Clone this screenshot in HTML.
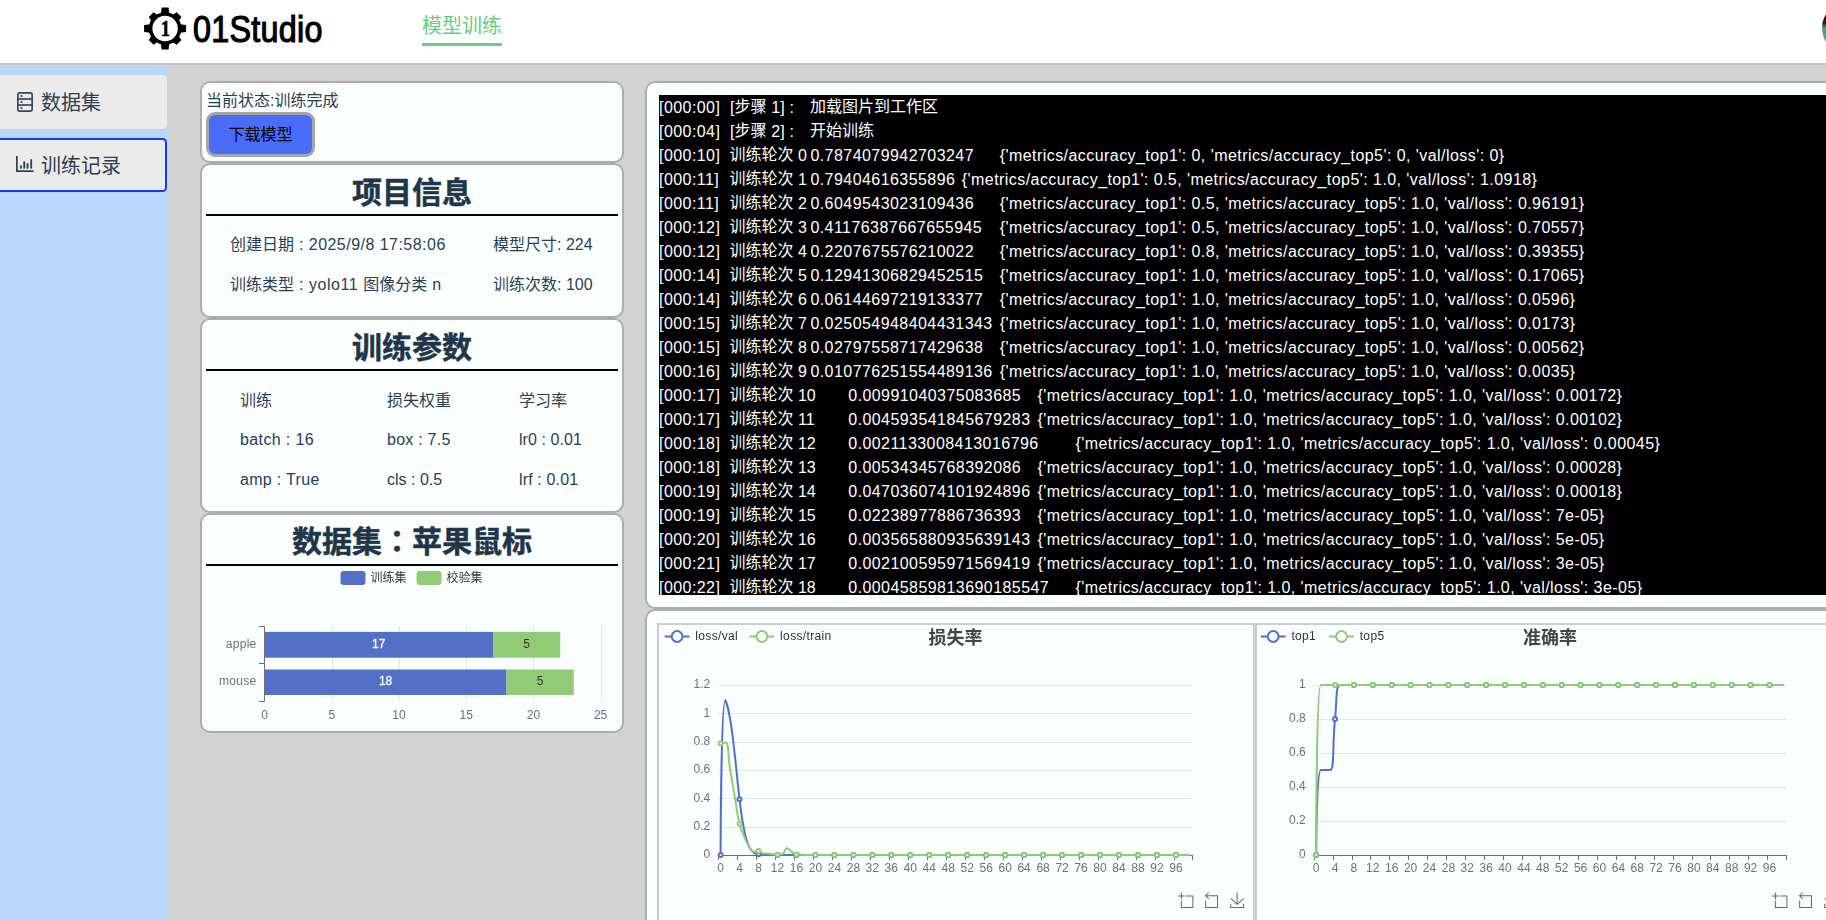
<!DOCTYPE html><html lang="zh-CN"><head><meta charset="utf-8"><title>01Studio 模型训练</title><style>
*{box-sizing:border-box;margin:0;padding:0}
html,body{width:1826px;height:920px;overflow:hidden}
body{position:relative;background:#d3d3d3;font-family:"Liberation Sans", "Noto Sans CJK SC", sans-serif;font-size:16px;color:#2c3e50;line-height:1.5}
.abs{position:absolute}
#hdr{position:absolute;left:0;top:0;width:1826px;height:63px;background:#fff}
#hline{position:absolute;left:0;top:63px;width:1826px;height:2px;background:#c6c6c6}
#logotxt{position:absolute;left:192.5px;top:6.6px;font-weight:normal;-webkit-text-stroke:1.15px #000;font-size:36px;line-height:46px;color:#000;transform-origin:0 0;transform:scaleX(.897);white-space:nowrap;letter-spacing:.3px}
#nav{position:absolute;left:422px;top:11px;width:80px;height:35px;font-size:20px;line-height:31px;color:#6dcb7d;border-bottom:3px solid #6dcb7d;white-space:nowrap}
#avatar{position:absolute;left:1822.3px;top:2px;width:52px;height:52px;border-radius:50%;background:linear-gradient(#2a1508 0,#2a1508 40%,#4c9c8c 50%,#58ad9b 100%)}
#side{position:absolute;left:0;top:65px;width:168px;height:855px;background:#bbd7fb}
.sitem{position:absolute;left:0;width:167px;height:54px;background:#ebebeb;border-radius:0 4.5px 4.5px 0;font-size:20px;color:#2c3e50}
.sitem span{position:absolute;left:41px;top:13px;line-height:30px;white-space:nowrap}
.sitem svg{position:absolute}
.card{position:absolute;left:200px;width:424px;background:#fbfeff;border:2px solid #adadad;border-radius:10px}
.card h1{position:absolute;left:0;width:420px;text-align:center;font-size:30px;line-height:40px;font-weight:bold;color:#213547;white-space:nowrap;-webkit-text-stroke:.45px #213547}
.hr{position:absolute;left:4px;width:412px;height:2px;background:#000}
.t{position:absolute;white-space:nowrap;line-height:24px;font-size:16px}
#btn{position:absolute;left:4px;top:29px;width:109px;height:45px;border:3px solid #a6a6a6;border-radius:9px;background:#4a6cfb;color:#000;font-size:16px;line-height:39px;text-align:center}
.panel{position:absolute;left:645px;width:1300px;background:#fbfeff;border:2px solid #adadad;border-radius:10px}
#log{position:absolute;left:659px;top:95px;width:1200px;height:500px;background:#000;color:#fff;overflow:hidden;font-size:16px}
.ln{position:relative;height:24px;line-height:24px;white-space:nowrap}
.ln>span{position:absolute;top:0;white-space:pre}
.ln>.l{letter-spacing:.44px;top:1px}
.ln i{font-style:normal;position:relative;top:-1px;letter-spacing:0}
.chart{position:absolute;top:623px;width:598px;height:304px;border:2px solid #ccc;background:#fbfeff}
svg text{font-family:"Liberation Sans", "Noto Sans CJK SC", sans-serif}
</style></head><body>
<div id="hdr"></div><div id="hline"></div>
<svg class="abs" style="left:0;top:0" width="340" height="63" viewBox="0 0 340 63"><g transform="translate(165.1,28.5)" fill="#000"><path d="M-4.3,-14.5L-3.45,-21.0H3.45L4.3,-14.5Z" transform="rotate(0)"/><path d="M-4.3,-14.5L-3.45,-19.7H3.45L4.3,-14.5Z" transform="rotate(45)"/><path d="M-4.3,-14.5L-3.45,-21.0H3.45L4.3,-14.5Z" transform="rotate(90)"/><path d="M-4.3,-14.5L-3.45,-19.7H3.45L4.3,-14.5Z" transform="rotate(135)"/><path d="M-4.3,-14.5L-3.45,-21.0H3.45L4.3,-14.5Z" transform="rotate(180)"/><path d="M-4.3,-14.5L-3.45,-19.7H3.45L4.3,-14.5Z" transform="rotate(225)"/><path d="M-4.3,-14.5L-3.45,-21.0H3.45L4.3,-14.5Z" transform="rotate(270)"/><path d="M-4.3,-14.5L-3.45,-19.7H3.45L4.3,-14.5Z" transform="rotate(315)"/><circle r="14.5" fill="none" stroke="#000" stroke-width="3.6"/><text transform="translate(.3,7.6) scale(.78,1)" x="0" y="0" text-anchor="middle" font-size="23" font-weight="bold" stroke="#000" stroke-width=".7" style="font-family:'Liberation Serif',serif">1</text></g></svg>
<div id="logotxt">01Studio</div>
<div id="nav">模型训练</div>
<div id="avatar"></div>
<div id="side"></div>
<div class="sitem" style="top:75px"><svg style="left:17px;top:17px" width="16" height="20" viewBox="0 0 16 20" fill="none" stroke="#34475a" stroke-width="1.7"><rect x="0.85" y="0.85" width="14.3" height="18.3" rx="1.6"/><line x1="0.85" y1="7" x2="15.15" y2="7"/><line x1="0.85" y1="13" x2="15.15" y2="13"/><g fill="#2c3e50" stroke="none"><rect x="3.6" y="3.1" width="1.8" height="1.8"/><rect x="3.6" y="9.1" width="1.8" height="1.8"/><rect x="3.6" y="15.1" width="1.8" height="1.8"/></g></svg><span>数据集</span></div>
<div class="sitem" style="top:138px;border:2px solid #0a3cff;border-left:0"><svg style="left:16px;top:16px" width="18" height="18" viewBox="0 0 18 18" fill="#2c3e50"><rect x="0" y="0" width="1.7" height="16"/><rect x="0" y="14.3" width="17.6" height="1.7"/><rect x="4.0" y="9.4" width="1.8" height="3.2"/><rect x="7.3" y="5.4" width="1.9" height="7.2"/><rect x="10.6" y="7.3" width="1.9" height="5.3"/><rect x="14.3" y="3.2" width="1.8" height="9.4"/></svg><span style="top:11px">训练记录</span></div>
<div class="card" style="top:81px;height:82px"><div class="t" style="left:4px;top:6px">当前状态:训练完成</div><div id="btn">下载模型</div></div>
<div class="card" style="top:163px;height:155px"><h1 style="top:8px">项目信息</h1><div class="hr" style="top:49px"></div><div class="t" style="left:28px;top:68.4px">创建日期<span style="letter-spacing:0.47px"> : 2025/9/8 17:58:06</span></div><div class="t" style="left:291px;top:68.4px">模型尺寸: 224</div><div class="t" style="left:28px;top:108.4px">训练类型<span style="letter-spacing:0.55px"> : yolo11 </span>图像分类<span style="letter-spacing:0.55px"> n</span></div><div class="t" style="left:291px;top:108.4px">训练次数: 100</div></div>
<div class="card" style="top:318px;height:195px"><h1 style="top:8px">训练参数</h1><div class="hr" style="top:49px"></div><div class="t" style="left:38px;top:68.7px">训练</div><div class="t" style="left:185px;top:68.7px">损失权重</div><div class="t" style="left:317px;top:68.7px">学习率</div><div class="t" style="left:38px;top:108px"><span style="letter-spacing:0.38px">batch : 16</span></div><div class="t" style="left:185px;top:108px"><span style="letter-spacing:0.24px">box : 7.5</span></div><div class="t" style="left:317px;top:108px"><span style="letter-spacing:0.07px">lr0 : 0.01</span></div><div class="t" style="left:38px;top:148px"><span style="letter-spacing:0.32px">amp : True</span></div><div class="t" style="left:185px;top:148px">cls : 0.5</div><div class="t" style="left:317px;top:148px"><span style="letter-spacing:0.15px">lrf : 0.01</span></div></div>
<div class="card" style="top:513px;height:220px"><h1 style="top:7px">数据集<span lang="ja" style="font-family:'Liberation Sans','Noto Sans CJK JP',sans-serif">：</span>苹果鼠标</h1><div class="hr" style="top:49px"></div><svg width="420" height="216" viewBox="0 0 420 216" style="position:absolute;left:0;top:0;will-change:transform"><rect x="138.5" y="56.0" width="25" height="14" rx="3" fill="#5470c6"/><text x="168.5" y="67.3" font-size="12" fill="#333">训练集</text><rect x="214.5" y="56.0" width="25" height="14" rx="3" fill="#91cc75"/><text x="244.5" y="67.3" font-size="12" fill="#333">校验集</text><line x1="130.5" x2="130.5" y1="111.2" y2="186.3" stroke="#E0E6F1"/><line x1="197.5" x2="197.5" y1="111.2" y2="186.3" stroke="#E0E6F1"/><line x1="264.5" x2="264.5" y1="111.2" y2="186.3" stroke="#E0E6F1"/><line x1="331.5" x2="331.5" y1="111.2" y2="186.3" stroke="#E0E6F1"/><line x1="399.5" x2="399.5" y1="111.2" y2="186.3" stroke="#E0E6F1"/><text x="62.6" y="203.7" font-size="12" fill="#6E7079" text-anchor="middle">0</text><text x="129.8" y="203.7" font-size="12" fill="#6E7079" text-anchor="middle">5</text><text x="197.0" y="203.7" font-size="12" fill="#6E7079" text-anchor="middle">10</text><text x="264.2" y="203.7" font-size="12" fill="#6E7079" text-anchor="middle">15</text><text x="331.4" y="203.7" font-size="12" fill="#6E7079" text-anchor="middle">20</text><text x="398.6" y="203.7" font-size="12" fill="#6E7079" text-anchor="middle">25</text><rect x="62.60" y="116.90" width="228.48" height="25.80" fill="#5470c6"/><rect x="291.08" y="116.90" width="67.20" height="25.80" fill="#91cc75"/><text x="176.8" y="133.0" font-size="12" fill="#f4f4f4" stroke="#f4f4f4" stroke-width=".4" text-anchor="middle">17</text><text x="324.7" y="133.0" font-size="12" fill="#333" text-anchor="middle">5</text><text x="54.6" y="132.6" font-size="12" fill="#6E7079" text-anchor="end" letter-spacing=".3">apple</text><rect x="62.60" y="154.50" width="241.92" height="25.50" fill="#5470c6"/><rect x="304.52" y="154.50" width="67.20" height="25.50" fill="#91cc75"/><text x="183.6" y="170.4" font-size="12" fill="#f4f4f4" stroke="#f4f4f4" stroke-width=".4" text-anchor="middle">18</text><text x="338.1" y="170.4" font-size="12" fill="#333" text-anchor="middle">5</text><text x="54.6" y="170.1" font-size="12" fill="#6E7079" text-anchor="end" letter-spacing=".3">mouse</text><line x1="62.5" x2="62.5" y1="111.2" y2="186.8" stroke="#6E7079"/><line x1="57.0" x2="62.5" y1="111.5" y2="111.5" stroke="#6E7079"/><line x1="57.0" x2="62.5" y1="148.5" y2="148.5" stroke="#6E7079"/><line x1="57.0" x2="62.5" y1="186.5" y2="186.5" stroke="#6E7079"/></svg></div>
<div class="panel" style="top:81px;height:528px"></div>
<div class="panel" style="top:609px;height:400px"></div>
<div id="log"><div class="ln"><span class="l" style="left:0">[000:00]</span><span class="l" style="left:71px;letter-spacing:.15px">[<i>步骤</i> 1] :</span><span style="left:151px">加载图片到工作区</span></div><div class="ln"><span class="l" style="left:0">[000:04]</span><span class="l" style="left:71px;letter-spacing:.15px">[<i>步骤</i> 2] :</span><span style="left:151px">开始训练</span></div><div class="ln"><span class="l" style="left:0">[000:10]</span><span class="l" style="left:70.5px;letter-spacing:0"><i>训练轮次</i> 0</span><span class="l" style="left:151.4px">0.7874079942703247</span><span class="l" style="left:340.7px">{'metrics/accuracy_top1': 0, 'metrics/accuracy_top5': 0, 'val/loss': 0}</span></div><div class="ln"><span class="l" style="left:0">[000:11]</span><span class="l" style="left:70.5px;letter-spacing:0"><i>训练轮次</i> 1</span><span class="l" style="left:151.4px">0.79404616355896</span><span class="l" style="left:302.8px">{'metrics/accuracy_top1': 0.5, 'metrics/accuracy_top5': 1.0, 'val/loss': 1.0918}</span></div><div class="ln"><span class="l" style="left:0">[000:11]</span><span class="l" style="left:70.5px;letter-spacing:0"><i>训练轮次</i> 2</span><span class="l" style="left:151.4px">0.6049543023109436</span><span class="l" style="left:340.7px">{'metrics/accuracy_top1': 0.5, 'metrics/accuracy_top5': 1.0, 'val/loss': 0.96191}</span></div><div class="ln"><span class="l" style="left:0">[000:12]</span><span class="l" style="left:70.5px;letter-spacing:0"><i>训练轮次</i> 3</span><span class="l" style="left:151.4px">0.41176387667655945</span><span class="l" style="left:340.7px">{'metrics/accuracy_top1': 0.5, 'metrics/accuracy_top5': 1.0, 'val/loss': 0.70557}</span></div><div class="ln"><span class="l" style="left:0">[000:12]</span><span class="l" style="left:70.5px;letter-spacing:0"><i>训练轮次</i> 4</span><span class="l" style="left:151.4px">0.2207675576210022</span><span class="l" style="left:340.7px">{'metrics/accuracy_top1': 0.8, 'metrics/accuracy_top5': 1.0, 'val/loss': 0.39355}</span></div><div class="ln"><span class="l" style="left:0">[000:14]</span><span class="l" style="left:70.5px;letter-spacing:0"><i>训练轮次</i> 5</span><span class="l" style="left:151.4px">0.12941306829452515</span><span class="l" style="left:340.7px">{'metrics/accuracy_top1': 1.0, 'metrics/accuracy_top5': 1.0, 'val/loss': 0.17065}</span></div><div class="ln"><span class="l" style="left:0">[000:14]</span><span class="l" style="left:70.5px;letter-spacing:0"><i>训练轮次</i> 6</span><span class="l" style="left:151.4px">0.06144697219133377</span><span class="l" style="left:340.7px">{'metrics/accuracy_top1': 1.0, 'metrics/accuracy_top5': 1.0, 'val/loss': 0.0596}</span></div><div class="ln"><span class="l" style="left:0">[000:15]</span><span class="l" style="left:70.5px;letter-spacing:0"><i>训练轮次</i> 7</span><span class="l" style="left:151.4px">0.025054948404431343</span><span class="l" style="left:340.7px">{'metrics/accuracy_top1': 1.0, 'metrics/accuracy_top5': 1.0, 'val/loss': 0.0173}</span></div><div class="ln"><span class="l" style="left:0">[000:15]</span><span class="l" style="left:70.5px;letter-spacing:0"><i>训练轮次</i> 8</span><span class="l" style="left:151.4px">0.02797558717429638</span><span class="l" style="left:340.7px">{'metrics/accuracy_top1': 1.0, 'metrics/accuracy_top5': 1.0, 'val/loss': 0.00562}</span></div><div class="ln"><span class="l" style="left:0">[000:16]</span><span class="l" style="left:70.5px;letter-spacing:0"><i>训练轮次</i> 9</span><span class="l" style="left:151.4px">0.010776251554489136</span><span class="l" style="left:340.7px">{'metrics/accuracy_top1': 1.0, 'metrics/accuracy_top5': 1.0, 'val/loss': 0.0035}</span></div><div class="ln"><span class="l" style="left:0">[000:17]</span><span class="l" style="left:70.5px;letter-spacing:0"><i>训练轮次</i> 10</span><span class="l" style="left:189.2px">0.00991040375083685</span><span class="l" style="left:378.5px">{'metrics/accuracy_top1': 1.0, 'metrics/accuracy_top5': 1.0, 'val/loss': 0.00172}</span></div><div class="ln"><span class="l" style="left:0">[000:17]</span><span class="l" style="left:70.5px;letter-spacing:0"><i>训练轮次</i> 11</span><span class="l" style="left:189.2px">0.004593541845679283</span><span class="l" style="left:378.5px">{'metrics/accuracy_top1': 1.0, 'metrics/accuracy_top5': 1.0, 'val/loss': 0.00102}</span></div><div class="ln"><span class="l" style="left:0">[000:18]</span><span class="l" style="left:70.5px;letter-spacing:0"><i>训练轮次</i> 12</span><span class="l" style="left:189.2px">0.0021133008413016796</span><span class="l" style="left:416.4px">{'metrics/accuracy_top1': 1.0, 'metrics/accuracy_top5': 1.0, 'val/loss': 0.00045}</span></div><div class="ln"><span class="l" style="left:0">[000:18]</span><span class="l" style="left:70.5px;letter-spacing:0"><i>训练轮次</i> 13</span><span class="l" style="left:189.2px">0.00534345768392086</span><span class="l" style="left:378.5px">{'metrics/accuracy_top1': 1.0, 'metrics/accuracy_top5': 1.0, 'val/loss': 0.00028}</span></div><div class="ln"><span class="l" style="left:0">[000:19]</span><span class="l" style="left:70.5px;letter-spacing:0"><i>训练轮次</i> 14</span><span class="l" style="left:189.2px">0.047036074101924896</span><span class="l" style="left:378.5px">{'metrics/accuracy_top1': 1.0, 'metrics/accuracy_top5': 1.0, 'val/loss': 0.00018}</span></div><div class="ln"><span class="l" style="left:0">[000:19]</span><span class="l" style="left:70.5px;letter-spacing:0"><i>训练轮次</i> 15</span><span class="l" style="left:189.2px">0.02238977886736393</span><span class="l" style="left:378.5px">{'metrics/accuracy_top1': 1.0, 'metrics/accuracy_top5': 1.0, 'val/loss': 7e-05}</span></div><div class="ln"><span class="l" style="left:0">[000:20]</span><span class="l" style="left:70.5px;letter-spacing:0"><i>训练轮次</i> 16</span><span class="l" style="left:189.2px">0.003565880935639143</span><span class="l" style="left:378.5px">{'metrics/accuracy_top1': 1.0, 'metrics/accuracy_top5': 1.0, 'val/loss': 5e-05}</span></div><div class="ln"><span class="l" style="left:0">[000:21]</span><span class="l" style="left:70.5px;letter-spacing:0"><i>训练轮次</i> 17</span><span class="l" style="left:189.2px">0.002100595971569419</span><span class="l" style="left:378.5px">{'metrics/accuracy_top1': 1.0, 'metrics/accuracy_top5': 1.0, 'val/loss': 3e-05}</span></div><div class="ln"><span class="l" style="left:0">[000:22]</span><span class="l" style="left:70.5px;letter-spacing:0"><i>训练轮次</i> 18</span><span class="l" style="left:189.2px">0.00045859813690185547</span><span class="l" style="left:416.4px">{'metrics/accuracy_top1': 1.0, 'metrics/accuracy_top5': 1.0, 'val/loss': 3e-05}</span></div></div>
<div class="chart" style="left:657px"></div><div class="chart" style="left:1255px"></div>
<svg class="abs" style="left:0;top:0;will-change:transform" width="1826" height="920" viewBox="0 0 1826 920"><text x="710.2" y="858.4" font-size="12" fill="#6E7079" text-anchor="end">0</text><line x1="718.2" x2="1192.5" y1="827.50" y2="827.50" stroke="#E0E6F1" stroke-width="1"/><text x="710.2" y="830.1" font-size="12" fill="#6E7079" text-anchor="end">0.2</text><line x1="718.2" x2="1192.5" y1="798.50" y2="798.50" stroke="#E0E6F1" stroke-width="1"/><text x="710.2" y="801.7" font-size="12" fill="#6E7079" text-anchor="end">0.4</text><line x1="718.2" x2="1192.5" y1="770.50" y2="770.50" stroke="#E0E6F1" stroke-width="1"/><text x="710.2" y="773.4" font-size="12" fill="#6E7079" text-anchor="end">0.6</text><line x1="718.2" x2="1192.5" y1="742.50" y2="742.50" stroke="#E0E6F1" stroke-width="1"/><text x="710.2" y="745.1" font-size="12" fill="#6E7079" text-anchor="end">0.8</text><line x1="718.2" x2="1192.5" y1="713.50" y2="713.50" stroke="#E0E6F1" stroke-width="1"/><text x="710.2" y="716.7" font-size="12" fill="#6E7079" text-anchor="end">1</text><line x1="718.2" x2="1192.5" y1="685.50" y2="685.50" stroke="#E0E6F1" stroke-width="1"/><text x="710.2" y="688.4" font-size="12" fill="#6E7079" text-anchor="end">1.2</text><line x1="718.2" x2="1193.0" y1="855.5" y2="855.5" stroke="#6E7079" stroke-width="1"/><line x1="718.5" x2="718.5" y1="855.0" y2="860.0" stroke="#6E7079" stroke-width="1"/><text x="720.6" y="872.3" font-size="12" fill="#6E7079" text-anchor="middle">0</text><line x1="737.5" x2="737.5" y1="855.0" y2="860.0" stroke="#6E7079" stroke-width="1"/><text x="739.5" y="872.3" font-size="12" fill="#6E7079" text-anchor="middle">4</text><line x1="756.5" x2="756.5" y1="855.0" y2="860.0" stroke="#6E7079" stroke-width="1"/><text x="758.5" y="872.3" font-size="12" fill="#6E7079" text-anchor="middle">8</text><line x1="775.5" x2="775.5" y1="855.0" y2="860.0" stroke="#6E7079" stroke-width="1"/><text x="777.5" y="872.3" font-size="12" fill="#6E7079" text-anchor="middle">12</text><line x1="794.5" x2="794.5" y1="855.0" y2="860.0" stroke="#6E7079" stroke-width="1"/><text x="796.5" y="872.3" font-size="12" fill="#6E7079" text-anchor="middle">16</text><line x1="813.5" x2="813.5" y1="855.0" y2="860.0" stroke="#6E7079" stroke-width="1"/><text x="815.4" y="872.3" font-size="12" fill="#6E7079" text-anchor="middle">20</text><line x1="832.5" x2="832.5" y1="855.0" y2="860.0" stroke="#6E7079" stroke-width="1"/><text x="834.4" y="872.3" font-size="12" fill="#6E7079" text-anchor="middle">24</text><line x1="851.5" x2="851.5" y1="855.0" y2="860.0" stroke="#6E7079" stroke-width="1"/><text x="853.4" y="872.3" font-size="12" fill="#6E7079" text-anchor="middle">28</text><line x1="870.5" x2="870.5" y1="855.0" y2="860.0" stroke="#6E7079" stroke-width="1"/><text x="872.3" y="872.3" font-size="12" fill="#6E7079" text-anchor="middle">32</text><line x1="889.5" x2="889.5" y1="855.0" y2="860.0" stroke="#6E7079" stroke-width="1"/><text x="891.3" y="872.3" font-size="12" fill="#6E7079" text-anchor="middle">36</text><line x1="908.5" x2="908.5" y1="855.0" y2="860.0" stroke="#6E7079" stroke-width="1"/><text x="910.3" y="872.3" font-size="12" fill="#6E7079" text-anchor="middle">40</text><line x1="927.5" x2="927.5" y1="855.0" y2="860.0" stroke="#6E7079" stroke-width="1"/><text x="929.3" y="872.3" font-size="12" fill="#6E7079" text-anchor="middle">44</text><line x1="946.5" x2="946.5" y1="855.0" y2="860.0" stroke="#6E7079" stroke-width="1"/><text x="948.2" y="872.3" font-size="12" fill="#6E7079" text-anchor="middle">48</text><line x1="965.5" x2="965.5" y1="855.0" y2="860.0" stroke="#6E7079" stroke-width="1"/><text x="967.2" y="872.3" font-size="12" fill="#6E7079" text-anchor="middle">52</text><line x1="984.5" x2="984.5" y1="855.0" y2="860.0" stroke="#6E7079" stroke-width="1"/><text x="986.2" y="872.3" font-size="12" fill="#6E7079" text-anchor="middle">56</text><line x1="1003.5" x2="1003.5" y1="855.0" y2="860.0" stroke="#6E7079" stroke-width="1"/><text x="1005.2" y="872.3" font-size="12" fill="#6E7079" text-anchor="middle">60</text><line x1="1022.5" x2="1022.5" y1="855.0" y2="860.0" stroke="#6E7079" stroke-width="1"/><text x="1024.1" y="872.3" font-size="12" fill="#6E7079" text-anchor="middle">64</text><line x1="1041.5" x2="1041.5" y1="855.0" y2="860.0" stroke="#6E7079" stroke-width="1"/><text x="1043.1" y="872.3" font-size="12" fill="#6E7079" text-anchor="middle">68</text><line x1="1060.5" x2="1060.5" y1="855.0" y2="860.0" stroke="#6E7079" stroke-width="1"/><text x="1062.1" y="872.3" font-size="12" fill="#6E7079" text-anchor="middle">72</text><line x1="1079.5" x2="1079.5" y1="855.0" y2="860.0" stroke="#6E7079" stroke-width="1"/><text x="1081.0" y="872.3" font-size="12" fill="#6E7079" text-anchor="middle">76</text><line x1="1098.5" x2="1098.5" y1="855.0" y2="860.0" stroke="#6E7079" stroke-width="1"/><text x="1100.0" y="872.3" font-size="12" fill="#6E7079" text-anchor="middle">80</text><line x1="1117.5" x2="1117.5" y1="855.0" y2="860.0" stroke="#6E7079" stroke-width="1"/><text x="1119.0" y="872.3" font-size="12" fill="#6E7079" text-anchor="middle">84</text><line x1="1136.5" x2="1136.5" y1="855.0" y2="860.0" stroke="#6E7079" stroke-width="1"/><text x="1138.0" y="872.3" font-size="12" fill="#6E7079" text-anchor="middle">88</text><line x1="1155.5" x2="1155.5" y1="855.0" y2="860.0" stroke="#6E7079" stroke-width="1"/><text x="1156.9" y="872.3" font-size="12" fill="#6E7079" text-anchor="middle">92</text><line x1="1174.5" x2="1174.5" y1="855.0" y2="860.0" stroke="#6E7079" stroke-width="1"/><text x="1175.9" y="872.3" font-size="12" fill="#6E7079" text-anchor="middle">96</text><line x1="1192.5" x2="1192.5" y1="855.0" y2="860.0" stroke="#6E7079" stroke-width="1"/><path d="M720.57,855.00C720.57,855.00 721.09,700.33 725.31,700.33C725.83,700.33 728.44,709.38 730.06,718.73C733.18,736.74 732.66,736.86 734.80,755.04C737.40,777.12 736.78,777.20 739.54,799.25C741.53,815.09 741.15,815.21 744.29,830.82C745.90,838.86 745.79,839.14 749.03,846.56C750.54,850.00 750.91,850.24 753.77,852.55C755.65,854.07 756.08,853.89 758.52,854.20C760.82,854.50 760.89,854.37 763.26,854.50C765.63,854.64 765.63,854.67 768.00,854.76C770.37,854.84 770.37,854.81 772.74,854.86C775.12,854.90 775.12,854.91 777.49,854.94C779.86,854.96 779.86,854.95 782.23,854.96C784.60,854.97 784.60,854.97 786.97,854.97C789.35,854.98 789.34,854.99 791.72,854.99C794.09,854.99 794.09,854.99 796.46,854.99C798.83,854.99 798.83,855.00 801.20,855.00C803.57,855.00 803.57,855.00 805.95,855.00C808.32,855.00 808.32,855.00 810.69,855.00C813.06,855.00 813.06,855.00 815.43,855.00C817.80,855.00 817.80,855.00 820.17,855.00C822.55,855.00 822.55,855.00 824.92,855.00C827.29,855.00 827.29,855.00 829.66,855.00C832.03,855.00 832.03,855.00 834.40,855.00C836.78,855.00 836.78,855.00 839.15,855.00C841.52,855.00 841.52,855.00 843.89,855.00C846.26,855.00 846.26,855.00 848.63,855.00C851.00,855.00 851.00,855.00 853.38,855.00C855.75,855.00 855.75,855.00 858.12,855.00C860.49,855.00 860.49,855.00 862.86,855.00C865.23,855.00 865.23,855.00 867.60,855.00C869.98,855.00 869.98,855.00 872.35,855.00C874.72,855.00 874.72,855.00 877.09,855.00C879.46,855.00 879.46,855.00 881.83,855.00C884.20,855.00 884.20,855.00 886.58,855.00C888.95,855.00 888.95,855.00 891.32,855.00C893.69,855.00 893.69,855.00 896.06,855.00C898.43,855.00 898.43,855.00 900.81,855.00C903.18,855.00 903.18,855.00 905.55,855.00C907.92,855.00 907.92,855.00 910.29,855.00C912.66,855.00 912.66,855.00 915.03,855.00C917.41,855.00 917.41,855.00 919.78,855.00C922.15,855.00 922.15,855.00 924.52,855.00C926.89,855.00 926.89,855.00 929.26,855.00C931.63,855.00 931.63,855.00 934.01,855.00C936.38,855.00 936.38,855.00 938.75,855.00C941.12,855.00 941.12,855.00 943.49,855.00C945.86,855.00 945.86,855.00 948.24,855.00C950.61,855.00 950.61,855.00 952.98,855.00C955.35,855.00 955.35,855.00 957.72,855.00C960.09,855.00 960.09,855.00 962.46,855.00C964.84,855.00 964.84,855.00 967.21,855.00C969.58,855.00 969.58,855.00 971.95,855.00C974.32,855.00 974.32,855.00 976.69,855.00C979.07,855.00 979.07,855.00 981.44,855.00C983.81,855.00 983.81,855.00 986.18,855.00C988.55,855.00 988.55,855.00 990.92,855.00C993.29,855.00 993.29,855.00 995.67,855.00C998.04,855.00 998.04,855.00 1000.41,855.00C1002.78,855.00 1002.78,855.00 1005.15,855.00C1007.52,855.00 1007.52,855.00 1009.89,855.00C1012.27,855.00 1012.27,855.00 1014.64,855.00C1017.01,855.00 1017.01,855.00 1019.38,855.00C1021.75,855.00 1021.75,855.00 1024.12,855.00C1026.50,855.00 1026.50,855.00 1028.87,855.00C1031.24,855.00 1031.24,855.00 1033.61,855.00C1035.98,855.00 1035.98,855.00 1038.35,855.00C1040.72,855.00 1040.72,855.00 1043.10,855.00C1045.47,855.00 1045.47,855.00 1047.84,855.00C1050.21,855.00 1050.21,855.00 1052.58,855.00C1054.95,855.00 1054.95,855.00 1057.32,855.00C1059.70,855.00 1059.70,855.00 1062.07,855.00C1064.44,855.00 1064.44,855.00 1066.81,855.00C1069.18,855.00 1069.18,855.00 1071.55,855.00C1073.92,855.00 1073.92,855.00 1076.30,855.00C1078.67,855.00 1078.67,855.00 1081.04,855.00C1083.41,855.00 1083.41,855.00 1085.78,855.00C1088.15,855.00 1088.15,855.00 1090.53,855.00C1092.90,855.00 1092.90,855.00 1095.27,855.00C1097.64,855.00 1097.64,855.00 1100.01,855.00C1102.38,855.00 1102.38,855.00 1104.75,855.00C1107.13,855.00 1107.13,855.00 1109.50,855.00C1111.87,855.00 1111.87,855.00 1114.24,855.00C1116.61,855.00 1116.61,855.00 1118.98,855.00C1121.36,855.00 1121.36,855.00 1123.73,855.00C1126.10,855.00 1126.10,855.00 1128.47,855.00C1130.84,855.00 1130.84,855.00 1133.21,855.00C1135.58,855.00 1135.58,855.00 1137.96,855.00C1140.33,855.00 1140.33,855.00 1142.70,855.00C1145.07,855.00 1145.07,855.00 1147.44,855.00C1149.81,855.00 1149.81,855.00 1152.18,855.00C1154.56,855.00 1154.56,855.00 1156.93,855.00C1159.30,855.00 1159.30,855.00 1161.67,855.00C1164.04,855.00 1164.04,855.00 1166.41,855.00C1168.79,855.00 1168.79,855.00 1171.16,855.00C1173.53,855.00 1173.53,855.00 1175.90,855.00C1178.27,855.00 1178.27,855.00 1180.64,855.00C1183.01,855.00 1183.01,855.00 1185.39,855.00C1187.76,855.00 1190.13,855.00 1190.13,855.00" fill="none" stroke="#5470c6" stroke-width="2" stroke-linejoin="bevel"/><path d="M720.57,743.45C720.57,743.45 724.60,742.51 725.31,742.51C729.34,742.51 727.71,755.90 730.06,769.30C732.45,782.98 732.42,782.98 734.80,796.67C737.16,810.20 736.39,810.41 739.54,823.72C741.13,830.41 741.62,830.32 744.29,836.67C746.36,841.61 746.16,841.82 749.03,846.30C750.90,849.21 750.95,851.45 753.77,851.45C755.69,851.45 756.28,851.04 758.52,851.04C761.02,851.04 760.75,853.34 763.26,853.47C765.49,853.60 765.64,853.47 768.00,853.60C770.39,853.72 770.36,854.07 772.74,854.35C775.10,854.62 775.12,854.70 777.49,854.70C779.86,854.70 780.40,854.70 782.23,854.24C785.14,853.52 784.31,848.34 786.97,848.34C789.05,848.34 789.25,850.23 791.72,851.83C793.99,853.31 793.93,854.26 796.46,854.49C798.67,854.70 798.83,854.59 801.20,854.70C803.57,854.81 803.57,854.94 805.95,854.94C808.32,854.94 808.32,854.91 810.69,854.91C813.06,854.91 813.06,854.91 815.43,854.91C817.80,854.91 817.80,854.91 820.17,854.91C822.55,854.91 822.55,854.91 824.92,854.91C827.29,854.91 827.29,854.91 829.66,854.91C832.03,854.91 832.03,854.91 834.40,854.91C836.78,854.91 836.78,854.91 839.15,854.91C841.52,854.91 841.52,854.91 843.89,854.91C846.26,854.91 846.26,854.91 848.63,854.91C851.00,854.91 851.00,854.91 853.38,854.91C855.75,854.91 855.75,854.91 858.12,854.91C860.49,854.91 860.49,854.91 862.86,854.91C865.23,854.91 865.23,854.91 867.60,854.91C869.98,854.91 869.98,854.91 872.35,854.91C874.72,854.91 874.72,854.91 877.09,854.91C879.46,854.91 879.46,854.91 881.83,854.91C884.20,854.91 884.20,854.91 886.58,854.91C888.95,854.91 888.95,854.91 891.32,854.91C893.69,854.91 893.69,854.91 896.06,854.91C898.43,854.91 898.43,854.91 900.81,854.91C903.18,854.91 903.18,854.91 905.55,854.91C907.92,854.91 907.92,854.91 910.29,854.91C912.66,854.91 912.66,854.91 915.03,854.91C917.41,854.91 917.41,854.91 919.78,854.91C922.15,854.91 922.15,854.91 924.52,854.91C926.89,854.91 926.89,854.91 929.26,854.91C931.63,854.91 931.63,854.91 934.01,854.91C936.38,854.91 936.38,854.91 938.75,854.91C941.12,854.91 941.12,854.91 943.49,854.91C945.86,854.91 945.86,854.91 948.24,854.91C950.61,854.91 950.61,854.91 952.98,854.91C955.35,854.91 955.35,854.91 957.72,854.91C960.09,854.91 960.09,854.91 962.46,854.91C964.84,854.91 964.84,854.91 967.21,854.91C969.58,854.91 969.58,854.91 971.95,854.91C974.32,854.91 974.32,854.91 976.69,854.91C979.07,854.91 979.07,854.91 981.44,854.91C983.81,854.91 983.81,854.91 986.18,854.91C988.55,854.91 988.55,854.91 990.92,854.91C993.29,854.91 993.29,854.91 995.67,854.91C998.04,854.91 998.04,854.91 1000.41,854.91C1002.78,854.91 1002.78,854.91 1005.15,854.91C1007.52,854.91 1007.52,854.91 1009.89,854.91C1012.27,854.91 1012.27,854.91 1014.64,854.91C1017.01,854.91 1017.01,854.91 1019.38,854.91C1021.75,854.91 1021.75,854.91 1024.12,854.91C1026.50,854.91 1026.50,854.91 1028.87,854.91C1031.24,854.91 1031.24,854.91 1033.61,854.91C1035.98,854.91 1035.98,854.91 1038.35,854.91C1040.72,854.91 1040.72,854.91 1043.10,854.91C1045.47,854.91 1045.47,854.91 1047.84,854.91C1050.21,854.91 1050.21,854.91 1052.58,854.91C1054.95,854.91 1054.95,854.91 1057.32,854.91C1059.70,854.91 1059.70,854.91 1062.07,854.91C1064.44,854.91 1064.44,854.91 1066.81,854.91C1069.18,854.91 1069.18,854.91 1071.55,854.91C1073.92,854.91 1073.92,854.91 1076.30,854.91C1078.67,854.91 1078.67,854.91 1081.04,854.91C1083.41,854.91 1083.41,854.91 1085.78,854.91C1088.15,854.91 1088.15,854.91 1090.53,854.91C1092.90,854.91 1092.90,854.91 1095.27,854.91C1097.64,854.91 1097.64,854.91 1100.01,854.91C1102.38,854.91 1102.38,854.91 1104.75,854.91C1107.13,854.91 1107.13,854.91 1109.50,854.91C1111.87,854.91 1111.87,854.91 1114.24,854.91C1116.61,854.91 1116.61,854.91 1118.98,854.91C1121.36,854.91 1121.36,854.91 1123.73,854.91C1126.10,854.91 1126.10,854.91 1128.47,854.91C1130.84,854.91 1130.84,854.91 1133.21,854.91C1135.58,854.91 1135.58,854.91 1137.96,854.91C1140.33,854.91 1140.33,854.91 1142.70,854.91C1145.07,854.91 1145.07,854.91 1147.44,854.91C1149.81,854.91 1149.81,854.91 1152.18,854.91C1154.56,854.91 1154.56,854.91 1156.93,854.91C1159.30,854.91 1159.30,854.91 1161.67,854.91C1164.04,854.91 1164.04,854.91 1166.41,854.91C1168.79,854.91 1168.79,854.91 1171.16,854.91C1173.53,854.91 1173.53,854.91 1175.90,854.91C1178.27,854.91 1178.27,854.91 1180.64,854.91C1183.01,854.91 1183.01,854.91 1185.39,854.91C1187.76,854.91 1190.13,854.91 1190.13,854.91" fill="none" stroke="#91cc75" stroke-width="2" stroke-linejoin="bevel"/><circle cx="720.57" cy="855.00" r="2" fill="#fff" stroke="#5470c6" stroke-width="2"/><circle cx="739.54" cy="799.25" r="2" fill="#fff" stroke="#5470c6" stroke-width="2"/><circle cx="758.52" cy="854.20" r="2" fill="#fff" stroke="#5470c6" stroke-width="2"/><circle cx="777.49" cy="854.94" r="2" fill="#fff" stroke="#5470c6" stroke-width="2"/><circle cx="796.46" cy="854.99" r="2" fill="#fff" stroke="#5470c6" stroke-width="2"/><circle cx="815.43" cy="855.00" r="2" fill="#fff" stroke="#5470c6" stroke-width="2"/><circle cx="834.40" cy="855.00" r="2" fill="#fff" stroke="#5470c6" stroke-width="2"/><circle cx="853.38" cy="855.00" r="2" fill="#fff" stroke="#5470c6" stroke-width="2"/><circle cx="872.35" cy="855.00" r="2" fill="#fff" stroke="#5470c6" stroke-width="2"/><circle cx="891.32" cy="855.00" r="2" fill="#fff" stroke="#5470c6" stroke-width="2"/><circle cx="910.29" cy="855.00" r="2" fill="#fff" stroke="#5470c6" stroke-width="2"/><circle cx="929.26" cy="855.00" r="2" fill="#fff" stroke="#5470c6" stroke-width="2"/><circle cx="948.24" cy="855.00" r="2" fill="#fff" stroke="#5470c6" stroke-width="2"/><circle cx="967.21" cy="855.00" r="2" fill="#fff" stroke="#5470c6" stroke-width="2"/><circle cx="986.18" cy="855.00" r="2" fill="#fff" stroke="#5470c6" stroke-width="2"/><circle cx="1005.15" cy="855.00" r="2" fill="#fff" stroke="#5470c6" stroke-width="2"/><circle cx="1024.12" cy="855.00" r="2" fill="#fff" stroke="#5470c6" stroke-width="2"/><circle cx="1043.10" cy="855.00" r="2" fill="#fff" stroke="#5470c6" stroke-width="2"/><circle cx="1062.07" cy="855.00" r="2" fill="#fff" stroke="#5470c6" stroke-width="2"/><circle cx="1081.04" cy="855.00" r="2" fill="#fff" stroke="#5470c6" stroke-width="2"/><circle cx="1100.01" cy="855.00" r="2" fill="#fff" stroke="#5470c6" stroke-width="2"/><circle cx="1118.98" cy="855.00" r="2" fill="#fff" stroke="#5470c6" stroke-width="2"/><circle cx="1137.96" cy="855.00" r="2" fill="#fff" stroke="#5470c6" stroke-width="2"/><circle cx="1156.93" cy="855.00" r="2" fill="#fff" stroke="#5470c6" stroke-width="2"/><circle cx="1175.90" cy="855.00" r="2" fill="#fff" stroke="#5470c6" stroke-width="2"/><circle cx="720.57" cy="743.45" r="2" fill="#fff" stroke="#91cc75" stroke-width="2"/><circle cx="739.54" cy="823.72" r="2" fill="#fff" stroke="#91cc75" stroke-width="2"/><circle cx="758.52" cy="851.04" r="2" fill="#fff" stroke="#91cc75" stroke-width="2"/><circle cx="777.49" cy="854.70" r="2" fill="#fff" stroke="#91cc75" stroke-width="2"/><circle cx="796.46" cy="854.49" r="2" fill="#fff" stroke="#91cc75" stroke-width="2"/><circle cx="815.43" cy="854.91" r="2" fill="#fff" stroke="#91cc75" stroke-width="2"/><circle cx="834.40" cy="854.91" r="2" fill="#fff" stroke="#91cc75" stroke-width="2"/><circle cx="853.38" cy="854.91" r="2" fill="#fff" stroke="#91cc75" stroke-width="2"/><circle cx="872.35" cy="854.91" r="2" fill="#fff" stroke="#91cc75" stroke-width="2"/><circle cx="891.32" cy="854.91" r="2" fill="#fff" stroke="#91cc75" stroke-width="2"/><circle cx="910.29" cy="854.91" r="2" fill="#fff" stroke="#91cc75" stroke-width="2"/><circle cx="929.26" cy="854.91" r="2" fill="#fff" stroke="#91cc75" stroke-width="2"/><circle cx="948.24" cy="854.91" r="2" fill="#fff" stroke="#91cc75" stroke-width="2"/><circle cx="967.21" cy="854.91" r="2" fill="#fff" stroke="#91cc75" stroke-width="2"/><circle cx="986.18" cy="854.91" r="2" fill="#fff" stroke="#91cc75" stroke-width="2"/><circle cx="1005.15" cy="854.91" r="2" fill="#fff" stroke="#91cc75" stroke-width="2"/><circle cx="1024.12" cy="854.91" r="2" fill="#fff" stroke="#91cc75" stroke-width="2"/><circle cx="1043.10" cy="854.91" r="2" fill="#fff" stroke="#91cc75" stroke-width="2"/><circle cx="1062.07" cy="854.91" r="2" fill="#fff" stroke="#91cc75" stroke-width="2"/><circle cx="1081.04" cy="854.91" r="2" fill="#fff" stroke="#91cc75" stroke-width="2"/><circle cx="1100.01" cy="854.91" r="2" fill="#fff" stroke="#91cc75" stroke-width="2"/><circle cx="1118.98" cy="854.91" r="2" fill="#fff" stroke="#91cc75" stroke-width="2"/><circle cx="1137.96" cy="854.91" r="2" fill="#fff" stroke="#91cc75" stroke-width="2"/><circle cx="1156.93" cy="854.91" r="2" fill="#fff" stroke="#91cc75" stroke-width="2"/><circle cx="1175.90" cy="854.91" r="2" fill="#fff" stroke="#91cc75" stroke-width="2"/><text x="955.4" y="644.0" font-size="18" font-weight="bold" fill="#464646" text-anchor="middle">损失率</text><path d="M664.6,636.5H671.8M682.4,636.5H689.6" stroke="#5470c6" stroke-width="2" fill="none"/><circle cx="677.1" cy="636.5" r="5.4" fill="#fbfeff" stroke="#5470c6" stroke-width="2"/><text x="695.3" y="639.8" font-size="12" fill="#333" letter-spacing=".35">loss/val</text><path d="M749.4,636.5H756.6M767.2,636.5H774.4" stroke="#91cc75" stroke-width="2" fill="none"/><circle cx="761.9" cy="636.5" r="5.4" fill="#fbfeff" stroke="#91cc75" stroke-width="2"/><text x="780.1" y="639.8" font-size="12" fill="#333" letter-spacing=".35">loss/train</text><path d="M0,13.5h26.9 M13.5,26.9V0 M32.1,13.5H58V58H13.5 V32.1" transform="translate(1177.90,892.50) scale(0.2586)" fill="none" stroke="#666" stroke-width="3.87"/><path d="M22,1.4L9.9,13.5l12.3,12.3 M10.3,13.5H54.9v44.6 H10.3v-26" transform="translate(1202.93,892.13) scale(0.2646)" fill="none" stroke="#666" stroke-width="3.78"/><path d="M4.7,22.9L29.3,45.5L54.7,23.4M4.6,43.6L4.6,58L53.8,58L53.8,43.6M29.2,45.1L29.2,0" transform="translate(1229.53,892.50) scale(0.2586)" fill="none" stroke="#666" stroke-width="3.87"/><text x="1305.8" y="858.4" font-size="12" fill="#6E7079" text-anchor="end">0</text><line x1="1313.8" x2="1786.0" y1="821.50" y2="821.50" stroke="#E0E6F1" stroke-width="1"/><text x="1305.8" y="824.4" font-size="12" fill="#6E7079" text-anchor="end">0.2</text><line x1="1313.8" x2="1786.0" y1="787.50" y2="787.50" stroke="#E0E6F1" stroke-width="1"/><text x="1305.8" y="790.4" font-size="12" fill="#6E7079" text-anchor="end">0.4</text><line x1="1313.8" x2="1786.0" y1="753.50" y2="753.50" stroke="#E0E6F1" stroke-width="1"/><text x="1305.8" y="756.4" font-size="12" fill="#6E7079" text-anchor="end">0.6</text><line x1="1313.8" x2="1786.0" y1="719.50" y2="719.50" stroke="#E0E6F1" stroke-width="1"/><text x="1305.8" y="722.4" font-size="12" fill="#6E7079" text-anchor="end">0.8</text><line x1="1313.8" x2="1786.0" y1="685.50" y2="685.50" stroke="#E0E6F1" stroke-width="1"/><text x="1305.8" y="688.4" font-size="12" fill="#6E7079" text-anchor="end">1</text><line x1="1313.8" x2="1786.5" y1="855.5" y2="855.5" stroke="#6E7079" stroke-width="1"/><line x1="1314.5" x2="1314.5" y1="855.0" y2="860.0" stroke="#6E7079" stroke-width="1"/><text x="1316.2" y="872.3" font-size="12" fill="#6E7079" text-anchor="middle">0</text><line x1="1333.5" x2="1333.5" y1="855.0" y2="860.0" stroke="#6E7079" stroke-width="1"/><text x="1335.0" y="872.3" font-size="12" fill="#6E7079" text-anchor="middle">4</text><line x1="1352.5" x2="1352.5" y1="855.0" y2="860.0" stroke="#6E7079" stroke-width="1"/><text x="1353.9" y="872.3" font-size="12" fill="#6E7079" text-anchor="middle">8</text><line x1="1370.5" x2="1370.5" y1="855.0" y2="860.0" stroke="#6E7079" stroke-width="1"/><text x="1372.8" y="872.3" font-size="12" fill="#6E7079" text-anchor="middle">12</text><line x1="1389.5" x2="1389.5" y1="855.0" y2="860.0" stroke="#6E7079" stroke-width="1"/><text x="1391.7" y="872.3" font-size="12" fill="#6E7079" text-anchor="middle">16</text><line x1="1408.5" x2="1408.5" y1="855.0" y2="860.0" stroke="#6E7079" stroke-width="1"/><text x="1410.6" y="872.3" font-size="12" fill="#6E7079" text-anchor="middle">20</text><line x1="1427.5" x2="1427.5" y1="855.0" y2="860.0" stroke="#6E7079" stroke-width="1"/><text x="1429.5" y="872.3" font-size="12" fill="#6E7079" text-anchor="middle">24</text><line x1="1446.5" x2="1446.5" y1="855.0" y2="860.0" stroke="#6E7079" stroke-width="1"/><text x="1448.4" y="872.3" font-size="12" fill="#6E7079" text-anchor="middle">28</text><line x1="1465.5" x2="1465.5" y1="855.0" y2="860.0" stroke="#6E7079" stroke-width="1"/><text x="1467.3" y="872.3" font-size="12" fill="#6E7079" text-anchor="middle">32</text><line x1="1484.5" x2="1484.5" y1="855.0" y2="860.0" stroke="#6E7079" stroke-width="1"/><text x="1486.2" y="872.3" font-size="12" fill="#6E7079" text-anchor="middle">36</text><line x1="1503.5" x2="1503.5" y1="855.0" y2="860.0" stroke="#6E7079" stroke-width="1"/><text x="1505.0" y="872.3" font-size="12" fill="#6E7079" text-anchor="middle">40</text><line x1="1522.5" x2="1522.5" y1="855.0" y2="860.0" stroke="#6E7079" stroke-width="1"/><text x="1523.9" y="872.3" font-size="12" fill="#6E7079" text-anchor="middle">44</text><line x1="1540.5" x2="1540.5" y1="855.0" y2="860.0" stroke="#6E7079" stroke-width="1"/><text x="1542.8" y="872.3" font-size="12" fill="#6E7079" text-anchor="middle">48</text><line x1="1559.5" x2="1559.5" y1="855.0" y2="860.0" stroke="#6E7079" stroke-width="1"/><text x="1561.7" y="872.3" font-size="12" fill="#6E7079" text-anchor="middle">52</text><line x1="1578.5" x2="1578.5" y1="855.0" y2="860.0" stroke="#6E7079" stroke-width="1"/><text x="1580.6" y="872.3" font-size="12" fill="#6E7079" text-anchor="middle">56</text><line x1="1597.5" x2="1597.5" y1="855.0" y2="860.0" stroke="#6E7079" stroke-width="1"/><text x="1599.5" y="872.3" font-size="12" fill="#6E7079" text-anchor="middle">60</text><line x1="1616.5" x2="1616.5" y1="855.0" y2="860.0" stroke="#6E7079" stroke-width="1"/><text x="1618.4" y="872.3" font-size="12" fill="#6E7079" text-anchor="middle">64</text><line x1="1635.5" x2="1635.5" y1="855.0" y2="860.0" stroke="#6E7079" stroke-width="1"/><text x="1637.3" y="872.3" font-size="12" fill="#6E7079" text-anchor="middle">68</text><line x1="1654.5" x2="1654.5" y1="855.0" y2="860.0" stroke="#6E7079" stroke-width="1"/><text x="1656.1" y="872.3" font-size="12" fill="#6E7079" text-anchor="middle">72</text><line x1="1673.5" x2="1673.5" y1="855.0" y2="860.0" stroke="#6E7079" stroke-width="1"/><text x="1675.0" y="872.3" font-size="12" fill="#6E7079" text-anchor="middle">76</text><line x1="1692.5" x2="1692.5" y1="855.0" y2="860.0" stroke="#6E7079" stroke-width="1"/><text x="1693.9" y="872.3" font-size="12" fill="#6E7079" text-anchor="middle">80</text><line x1="1710.5" x2="1710.5" y1="855.0" y2="860.0" stroke="#6E7079" stroke-width="1"/><text x="1712.8" y="872.3" font-size="12" fill="#6E7079" text-anchor="middle">84</text><line x1="1729.5" x2="1729.5" y1="855.0" y2="860.0" stroke="#6E7079" stroke-width="1"/><text x="1731.7" y="872.3" font-size="12" fill="#6E7079" text-anchor="middle">88</text><line x1="1748.5" x2="1748.5" y1="855.0" y2="860.0" stroke="#6E7079" stroke-width="1"/><text x="1750.6" y="872.3" font-size="12" fill="#6E7079" text-anchor="middle">92</text><line x1="1767.5" x2="1767.5" y1="855.0" y2="860.0" stroke="#6E7079" stroke-width="1"/><text x="1769.5" y="872.3" font-size="12" fill="#6E7079" text-anchor="middle">96</text><line x1="1786.5" x2="1786.5" y1="855.0" y2="860.0" stroke="#6E7079" stroke-width="1"/><path d="M1316.16,855.00C1316.16,855.00 1316.41,770.00 1320.88,770.00C1321.13,770.00 1323.24,770.00 1325.61,770.00C1327.97,770.00 1329.93,770.00 1330.33,770.00C1334.65,770.00 1332.22,744.45 1335.05,719.00C1336.94,701.95 1335.62,685.00 1339.77,685.00C1340.34,685.00 1342.13,685.00 1344.49,685.00C1346.85,685.00 1346.85,685.00 1349.21,685.00C1351.58,685.00 1351.58,685.00 1353.94,685.00C1356.30,685.00 1356.30,685.00 1358.66,685.00C1361.02,685.00 1361.02,685.00 1363.38,685.00C1365.74,685.00 1365.74,685.00 1368.10,685.00C1370.46,685.00 1370.46,685.00 1372.83,685.00C1375.19,685.00 1375.19,685.00 1377.55,685.00C1379.91,685.00 1379.91,685.00 1382.27,685.00C1384.63,685.00 1384.63,685.00 1386.99,685.00C1389.35,685.00 1389.35,685.00 1391.71,685.00C1394.07,685.00 1394.07,685.00 1396.43,685.00C1398.80,685.00 1398.80,685.00 1401.16,685.00C1403.52,685.00 1403.52,685.00 1405.88,685.00C1408.24,685.00 1408.24,685.00 1410.60,685.00C1412.96,685.00 1412.96,685.00 1415.32,685.00C1417.68,685.00 1417.68,685.00 1420.05,685.00C1422.41,685.00 1422.41,685.00 1424.77,685.00C1427.13,685.00 1427.13,685.00 1429.49,685.00C1431.85,685.00 1431.85,685.00 1434.21,685.00C1436.57,685.00 1436.57,685.00 1438.93,685.00C1441.29,685.00 1441.29,685.00 1443.65,685.00C1446.02,685.00 1446.02,685.00 1448.38,685.00C1450.74,685.00 1450.74,685.00 1453.10,685.00C1455.46,685.00 1455.46,685.00 1457.82,685.00C1460.18,685.00 1460.18,685.00 1462.54,685.00C1464.90,685.00 1464.90,685.00 1467.26,685.00C1469.63,685.00 1469.63,685.00 1471.99,685.00C1474.35,685.00 1474.35,685.00 1476.71,685.00C1479.07,685.00 1479.07,685.00 1481.43,685.00C1483.79,685.00 1483.79,685.00 1486.15,685.00C1488.51,685.00 1488.51,685.00 1490.88,685.00C1493.24,685.00 1493.24,685.00 1495.60,685.00C1497.96,685.00 1497.96,685.00 1500.32,685.00C1502.68,685.00 1502.68,685.00 1505.04,685.00C1507.40,685.00 1507.40,685.00 1509.76,685.00C1512.12,685.00 1512.12,685.00 1514.48,685.00C1516.85,685.00 1516.85,685.00 1519.21,685.00C1521.57,685.00 1521.57,685.00 1523.93,685.00C1526.29,685.00 1526.29,685.00 1528.65,685.00C1531.01,685.00 1531.01,685.00 1533.37,685.00C1535.73,685.00 1535.73,685.00 1538.10,685.00C1540.46,685.00 1540.46,685.00 1542.82,685.00C1545.18,685.00 1545.18,685.00 1547.54,685.00C1549.90,685.00 1549.90,685.00 1552.26,685.00C1554.62,685.00 1554.62,685.00 1556.98,685.00C1559.34,685.00 1559.34,685.00 1561.70,685.00C1564.07,685.00 1564.07,685.00 1566.43,685.00C1568.79,685.00 1568.79,685.00 1571.15,685.00C1573.51,685.00 1573.51,685.00 1575.87,685.00C1578.23,685.00 1578.23,685.00 1580.59,685.00C1582.95,685.00 1582.95,685.00 1585.32,685.00C1587.68,685.00 1587.68,685.00 1590.04,685.00C1592.40,685.00 1592.40,685.00 1594.76,685.00C1597.12,685.00 1597.12,685.00 1599.48,685.00C1601.84,685.00 1601.84,685.00 1604.20,685.00C1606.56,685.00 1606.56,685.00 1608.92,685.00C1611.29,685.00 1611.29,685.00 1613.65,685.00C1616.01,685.00 1616.01,685.00 1618.37,685.00C1620.73,685.00 1620.73,685.00 1623.09,685.00C1625.45,685.00 1625.45,685.00 1627.81,685.00C1630.17,685.00 1630.17,685.00 1632.53,685.00C1634.90,685.00 1634.90,685.00 1637.26,685.00C1639.62,685.00 1639.62,685.00 1641.98,685.00C1644.34,685.00 1644.34,685.00 1646.70,685.00C1649.06,685.00 1649.06,685.00 1651.42,685.00C1653.78,685.00 1653.78,685.00 1656.14,685.00C1658.51,685.00 1658.51,685.00 1660.87,685.00C1663.23,685.00 1663.23,685.00 1665.59,685.00C1667.95,685.00 1667.95,685.00 1670.31,685.00C1672.67,685.00 1672.67,685.00 1675.03,685.00C1677.39,685.00 1677.39,685.00 1679.76,685.00C1682.12,685.00 1682.12,685.00 1684.48,685.00C1686.84,685.00 1686.84,685.00 1689.20,685.00C1691.56,685.00 1691.56,685.00 1693.92,685.00C1696.28,685.00 1696.28,685.00 1698.64,685.00C1701.00,685.00 1701.00,685.00 1703.37,685.00C1705.73,685.00 1705.73,685.00 1708.09,685.00C1710.45,685.00 1710.45,685.00 1712.81,685.00C1715.17,685.00 1715.17,685.00 1717.53,685.00C1719.89,685.00 1719.89,685.00 1722.25,685.00C1724.61,685.00 1724.61,685.00 1726.97,685.00C1729.34,685.00 1729.34,685.00 1731.70,685.00C1734.06,685.00 1734.06,685.00 1736.42,685.00C1738.78,685.00 1738.78,685.00 1741.14,685.00C1743.50,685.00 1743.50,685.00 1745.86,685.00C1748.22,685.00 1748.22,685.00 1750.59,685.00C1752.95,685.00 1752.95,685.00 1755.31,685.00C1757.67,685.00 1757.67,685.00 1760.03,685.00C1762.39,685.00 1762.39,685.00 1764.75,685.00C1767.11,685.00 1767.11,685.00 1769.47,685.00C1771.83,685.00 1771.83,685.00 1774.19,685.00C1776.56,685.00 1776.56,685.00 1778.92,685.00C1781.28,685.00 1783.64,685.00 1783.64,685.00" fill="none" stroke="#5470c6" stroke-width="2" stroke-linejoin="bevel"/><path d="M1316.16,855.00C1316.16,855.00 1316.29,685.00 1320.88,685.00C1321.01,685.00 1323.24,685.00 1325.61,685.00C1327.97,685.00 1327.97,685.00 1330.33,685.00C1332.69,685.00 1332.69,685.00 1335.05,685.00C1337.41,685.00 1337.41,685.00 1339.77,685.00C1342.13,685.00 1342.13,685.00 1344.49,685.00C1346.85,685.00 1346.85,685.00 1349.21,685.00C1351.58,685.00 1351.58,685.00 1353.94,685.00C1356.30,685.00 1356.30,685.00 1358.66,685.00C1361.02,685.00 1361.02,685.00 1363.38,685.00C1365.74,685.00 1365.74,685.00 1368.10,685.00C1370.46,685.00 1370.46,685.00 1372.83,685.00C1375.19,685.00 1375.19,685.00 1377.55,685.00C1379.91,685.00 1379.91,685.00 1382.27,685.00C1384.63,685.00 1384.63,685.00 1386.99,685.00C1389.35,685.00 1389.35,685.00 1391.71,685.00C1394.07,685.00 1394.07,685.00 1396.43,685.00C1398.80,685.00 1398.80,685.00 1401.16,685.00C1403.52,685.00 1403.52,685.00 1405.88,685.00C1408.24,685.00 1408.24,685.00 1410.60,685.00C1412.96,685.00 1412.96,685.00 1415.32,685.00C1417.68,685.00 1417.68,685.00 1420.05,685.00C1422.41,685.00 1422.41,685.00 1424.77,685.00C1427.13,685.00 1427.13,685.00 1429.49,685.00C1431.85,685.00 1431.85,685.00 1434.21,685.00C1436.57,685.00 1436.57,685.00 1438.93,685.00C1441.29,685.00 1441.29,685.00 1443.65,685.00C1446.02,685.00 1446.02,685.00 1448.38,685.00C1450.74,685.00 1450.74,685.00 1453.10,685.00C1455.46,685.00 1455.46,685.00 1457.82,685.00C1460.18,685.00 1460.18,685.00 1462.54,685.00C1464.90,685.00 1464.90,685.00 1467.26,685.00C1469.63,685.00 1469.63,685.00 1471.99,685.00C1474.35,685.00 1474.35,685.00 1476.71,685.00C1479.07,685.00 1479.07,685.00 1481.43,685.00C1483.79,685.00 1483.79,685.00 1486.15,685.00C1488.51,685.00 1488.51,685.00 1490.88,685.00C1493.24,685.00 1493.24,685.00 1495.60,685.00C1497.96,685.00 1497.96,685.00 1500.32,685.00C1502.68,685.00 1502.68,685.00 1505.04,685.00C1507.40,685.00 1507.40,685.00 1509.76,685.00C1512.12,685.00 1512.12,685.00 1514.48,685.00C1516.85,685.00 1516.85,685.00 1519.21,685.00C1521.57,685.00 1521.57,685.00 1523.93,685.00C1526.29,685.00 1526.29,685.00 1528.65,685.00C1531.01,685.00 1531.01,685.00 1533.37,685.00C1535.73,685.00 1535.73,685.00 1538.10,685.00C1540.46,685.00 1540.46,685.00 1542.82,685.00C1545.18,685.00 1545.18,685.00 1547.54,685.00C1549.90,685.00 1549.90,685.00 1552.26,685.00C1554.62,685.00 1554.62,685.00 1556.98,685.00C1559.34,685.00 1559.34,685.00 1561.70,685.00C1564.07,685.00 1564.07,685.00 1566.43,685.00C1568.79,685.00 1568.79,685.00 1571.15,685.00C1573.51,685.00 1573.51,685.00 1575.87,685.00C1578.23,685.00 1578.23,685.00 1580.59,685.00C1582.95,685.00 1582.95,685.00 1585.32,685.00C1587.68,685.00 1587.68,685.00 1590.04,685.00C1592.40,685.00 1592.40,685.00 1594.76,685.00C1597.12,685.00 1597.12,685.00 1599.48,685.00C1601.84,685.00 1601.84,685.00 1604.20,685.00C1606.56,685.00 1606.56,685.00 1608.92,685.00C1611.29,685.00 1611.29,685.00 1613.65,685.00C1616.01,685.00 1616.01,685.00 1618.37,685.00C1620.73,685.00 1620.73,685.00 1623.09,685.00C1625.45,685.00 1625.45,685.00 1627.81,685.00C1630.17,685.00 1630.17,685.00 1632.53,685.00C1634.90,685.00 1634.90,685.00 1637.26,685.00C1639.62,685.00 1639.62,685.00 1641.98,685.00C1644.34,685.00 1644.34,685.00 1646.70,685.00C1649.06,685.00 1649.06,685.00 1651.42,685.00C1653.78,685.00 1653.78,685.00 1656.14,685.00C1658.51,685.00 1658.51,685.00 1660.87,685.00C1663.23,685.00 1663.23,685.00 1665.59,685.00C1667.95,685.00 1667.95,685.00 1670.31,685.00C1672.67,685.00 1672.67,685.00 1675.03,685.00C1677.39,685.00 1677.39,685.00 1679.76,685.00C1682.12,685.00 1682.12,685.00 1684.48,685.00C1686.84,685.00 1686.84,685.00 1689.20,685.00C1691.56,685.00 1691.56,685.00 1693.92,685.00C1696.28,685.00 1696.28,685.00 1698.64,685.00C1701.00,685.00 1701.00,685.00 1703.37,685.00C1705.73,685.00 1705.73,685.00 1708.09,685.00C1710.45,685.00 1710.45,685.00 1712.81,685.00C1715.17,685.00 1715.17,685.00 1717.53,685.00C1719.89,685.00 1719.89,685.00 1722.25,685.00C1724.61,685.00 1724.61,685.00 1726.97,685.00C1729.34,685.00 1729.34,685.00 1731.70,685.00C1734.06,685.00 1734.06,685.00 1736.42,685.00C1738.78,685.00 1738.78,685.00 1741.14,685.00C1743.50,685.00 1743.50,685.00 1745.86,685.00C1748.22,685.00 1748.22,685.00 1750.59,685.00C1752.95,685.00 1752.95,685.00 1755.31,685.00C1757.67,685.00 1757.67,685.00 1760.03,685.00C1762.39,685.00 1762.39,685.00 1764.75,685.00C1767.11,685.00 1767.11,685.00 1769.47,685.00C1771.83,685.00 1771.83,685.00 1774.19,685.00C1776.56,685.00 1776.56,685.00 1778.92,685.00C1781.28,685.00 1783.64,685.00 1783.64,685.00" fill="none" stroke="#91cc75" stroke-width="2" stroke-linejoin="bevel"/><circle cx="1316.16" cy="855.00" r="2" fill="#fff" stroke="#5470c6" stroke-width="2"/><circle cx="1335.05" cy="719.00" r="2" fill="#fff" stroke="#5470c6" stroke-width="2"/><circle cx="1353.94" cy="685.00" r="2" fill="#fff" stroke="#5470c6" stroke-width="2"/><circle cx="1372.83" cy="685.00" r="2" fill="#fff" stroke="#5470c6" stroke-width="2"/><circle cx="1391.71" cy="685.00" r="2" fill="#fff" stroke="#5470c6" stroke-width="2"/><circle cx="1410.60" cy="685.00" r="2" fill="#fff" stroke="#5470c6" stroke-width="2"/><circle cx="1429.49" cy="685.00" r="2" fill="#fff" stroke="#5470c6" stroke-width="2"/><circle cx="1448.38" cy="685.00" r="2" fill="#fff" stroke="#5470c6" stroke-width="2"/><circle cx="1467.26" cy="685.00" r="2" fill="#fff" stroke="#5470c6" stroke-width="2"/><circle cx="1486.15" cy="685.00" r="2" fill="#fff" stroke="#5470c6" stroke-width="2"/><circle cx="1505.04" cy="685.00" r="2" fill="#fff" stroke="#5470c6" stroke-width="2"/><circle cx="1523.93" cy="685.00" r="2" fill="#fff" stroke="#5470c6" stroke-width="2"/><circle cx="1542.82" cy="685.00" r="2" fill="#fff" stroke="#5470c6" stroke-width="2"/><circle cx="1561.70" cy="685.00" r="2" fill="#fff" stroke="#5470c6" stroke-width="2"/><circle cx="1580.59" cy="685.00" r="2" fill="#fff" stroke="#5470c6" stroke-width="2"/><circle cx="1599.48" cy="685.00" r="2" fill="#fff" stroke="#5470c6" stroke-width="2"/><circle cx="1618.37" cy="685.00" r="2" fill="#fff" stroke="#5470c6" stroke-width="2"/><circle cx="1637.26" cy="685.00" r="2" fill="#fff" stroke="#5470c6" stroke-width="2"/><circle cx="1656.14" cy="685.00" r="2" fill="#fff" stroke="#5470c6" stroke-width="2"/><circle cx="1675.03" cy="685.00" r="2" fill="#fff" stroke="#5470c6" stroke-width="2"/><circle cx="1693.92" cy="685.00" r="2" fill="#fff" stroke="#5470c6" stroke-width="2"/><circle cx="1712.81" cy="685.00" r="2" fill="#fff" stroke="#5470c6" stroke-width="2"/><circle cx="1731.70" cy="685.00" r="2" fill="#fff" stroke="#5470c6" stroke-width="2"/><circle cx="1750.59" cy="685.00" r="2" fill="#fff" stroke="#5470c6" stroke-width="2"/><circle cx="1769.47" cy="685.00" r="2" fill="#fff" stroke="#5470c6" stroke-width="2"/><circle cx="1316.16" cy="855.00" r="2" fill="#fff" stroke="#91cc75" stroke-width="2"/><circle cx="1335.05" cy="685.00" r="2" fill="#fff" stroke="#91cc75" stroke-width="2"/><circle cx="1353.94" cy="685.00" r="2" fill="#fff" stroke="#91cc75" stroke-width="2"/><circle cx="1372.83" cy="685.00" r="2" fill="#fff" stroke="#91cc75" stroke-width="2"/><circle cx="1391.71" cy="685.00" r="2" fill="#fff" stroke="#91cc75" stroke-width="2"/><circle cx="1410.60" cy="685.00" r="2" fill="#fff" stroke="#91cc75" stroke-width="2"/><circle cx="1429.49" cy="685.00" r="2" fill="#fff" stroke="#91cc75" stroke-width="2"/><circle cx="1448.38" cy="685.00" r="2" fill="#fff" stroke="#91cc75" stroke-width="2"/><circle cx="1467.26" cy="685.00" r="2" fill="#fff" stroke="#91cc75" stroke-width="2"/><circle cx="1486.15" cy="685.00" r="2" fill="#fff" stroke="#91cc75" stroke-width="2"/><circle cx="1505.04" cy="685.00" r="2" fill="#fff" stroke="#91cc75" stroke-width="2"/><circle cx="1523.93" cy="685.00" r="2" fill="#fff" stroke="#91cc75" stroke-width="2"/><circle cx="1542.82" cy="685.00" r="2" fill="#fff" stroke="#91cc75" stroke-width="2"/><circle cx="1561.70" cy="685.00" r="2" fill="#fff" stroke="#91cc75" stroke-width="2"/><circle cx="1580.59" cy="685.00" r="2" fill="#fff" stroke="#91cc75" stroke-width="2"/><circle cx="1599.48" cy="685.00" r="2" fill="#fff" stroke="#91cc75" stroke-width="2"/><circle cx="1618.37" cy="685.00" r="2" fill="#fff" stroke="#91cc75" stroke-width="2"/><circle cx="1637.26" cy="685.00" r="2" fill="#fff" stroke="#91cc75" stroke-width="2"/><circle cx="1656.14" cy="685.00" r="2" fill="#fff" stroke="#91cc75" stroke-width="2"/><circle cx="1675.03" cy="685.00" r="2" fill="#fff" stroke="#91cc75" stroke-width="2"/><circle cx="1693.92" cy="685.00" r="2" fill="#fff" stroke="#91cc75" stroke-width="2"/><circle cx="1712.81" cy="685.00" r="2" fill="#fff" stroke="#91cc75" stroke-width="2"/><circle cx="1731.70" cy="685.00" r="2" fill="#fff" stroke="#91cc75" stroke-width="2"/><circle cx="1750.59" cy="685.00" r="2" fill="#fff" stroke="#91cc75" stroke-width="2"/><circle cx="1769.47" cy="685.00" r="2" fill="#fff" stroke="#91cc75" stroke-width="2"/><text x="1549.9" y="644.0" font-size="18" font-weight="bold" fill="#464646" text-anchor="middle">准确率</text><path d="M1260.7,636.5H1267.9M1278.5,636.5H1285.7" stroke="#5470c6" stroke-width="2" fill="none"/><circle cx="1273.2" cy="636.5" r="5.4" fill="#fbfeff" stroke="#5470c6" stroke-width="2"/><text x="1291.4" y="639.8" font-size="12" fill="#333" letter-spacing=".35">top1</text><path d="M1329.0,636.5H1336.2M1346.8,636.5H1354.0" stroke="#91cc75" stroke-width="2" fill="none"/><circle cx="1341.5" cy="636.5" r="5.4" fill="#fbfeff" stroke="#91cc75" stroke-width="2"/><text x="1359.7" y="639.8" font-size="12" fill="#333" letter-spacing=".35">top5</text><path d="M0,13.5h26.9 M13.5,26.9V0 M32.1,13.5H58V58H13.5 V32.1" transform="translate(1771.90,892.50) scale(0.2586)" fill="none" stroke="#666" stroke-width="3.87"/><path d="M22,1.4L9.9,13.5l12.3,12.3 M10.3,13.5H54.9v44.6 H10.3v-26" transform="translate(1796.93,892.13) scale(0.2646)" fill="none" stroke="#666" stroke-width="3.78"/><path d="M4.7,22.9L29.3,45.5L54.7,23.4M4.6,43.6L4.6,58L53.8,58L53.8,43.6M29.2,45.1L29.2,0" transform="translate(1823.53,892.50) scale(0.2586)" fill="none" stroke="#666" stroke-width="3.87"/></svg>
</body></html>
